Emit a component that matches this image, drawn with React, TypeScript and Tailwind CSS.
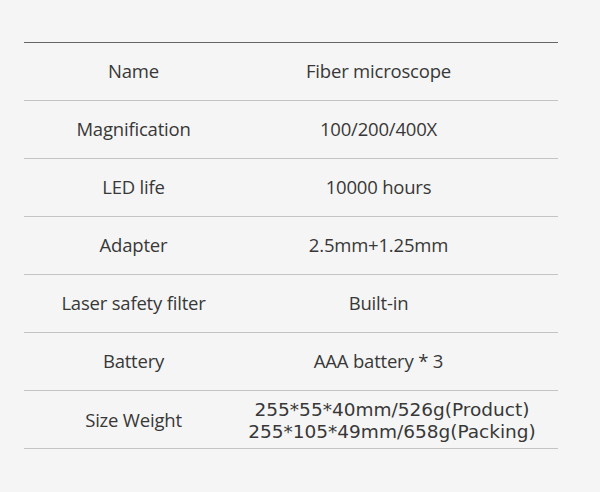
const rows: { label: string; value: string }[] = [
  { label: "Name", value: "Fiber microscope" },
  { label: "Magnification", value: "100/200/400X" },
  { label: "LED life", value: "10000 hours" },
  { label: "Adapter", value: "2.5mm+1.25mm" },
  { label: "Laser safety filter", value: "Built-in" },
  { label: "Battery", value: "AAA battery * 3" },
];

export default function App() {
  return (
    <main className="min-h-[492px] w-[600px] bg-[#f5f5f5] pt-[42px] font-['Open_Sans',sans-serif] text-[#383838]">
      <div className="ml-[24px] w-[534px] border-t border-[#666]">
        {rows.map((r) => (
          <div key={r.label} className="flex h-[58px] items-center border-b border-[#c4c4c4] pb-[2px] text-[18.5px]">
            <div className="w-[219px] text-center tracking-[-0.2px]">{r.label}</div>
            <div className="w-[271px] text-center tracking-[-0.2px]">{r.value}</div>
          </div>
        ))}
        <div className="flex h-[58px] items-center border-b border-[#c4c4c4]">
          <div className="w-[219px] text-center text-[18.5px] tracking-[-0.2px]">Size Weight</div>
          <div className="w-[298px] pt-[3px] text-center font-['DejaVu_Sans',sans-serif] text-[18.5px] leading-[22px] whitespace-nowrap">
            <div>255*55*40mm/526g(Product)</div>
            <div>255*105*49mm/658g(Packing)</div>
          </div>
        </div>
      </div>
    </main>
  );
}
